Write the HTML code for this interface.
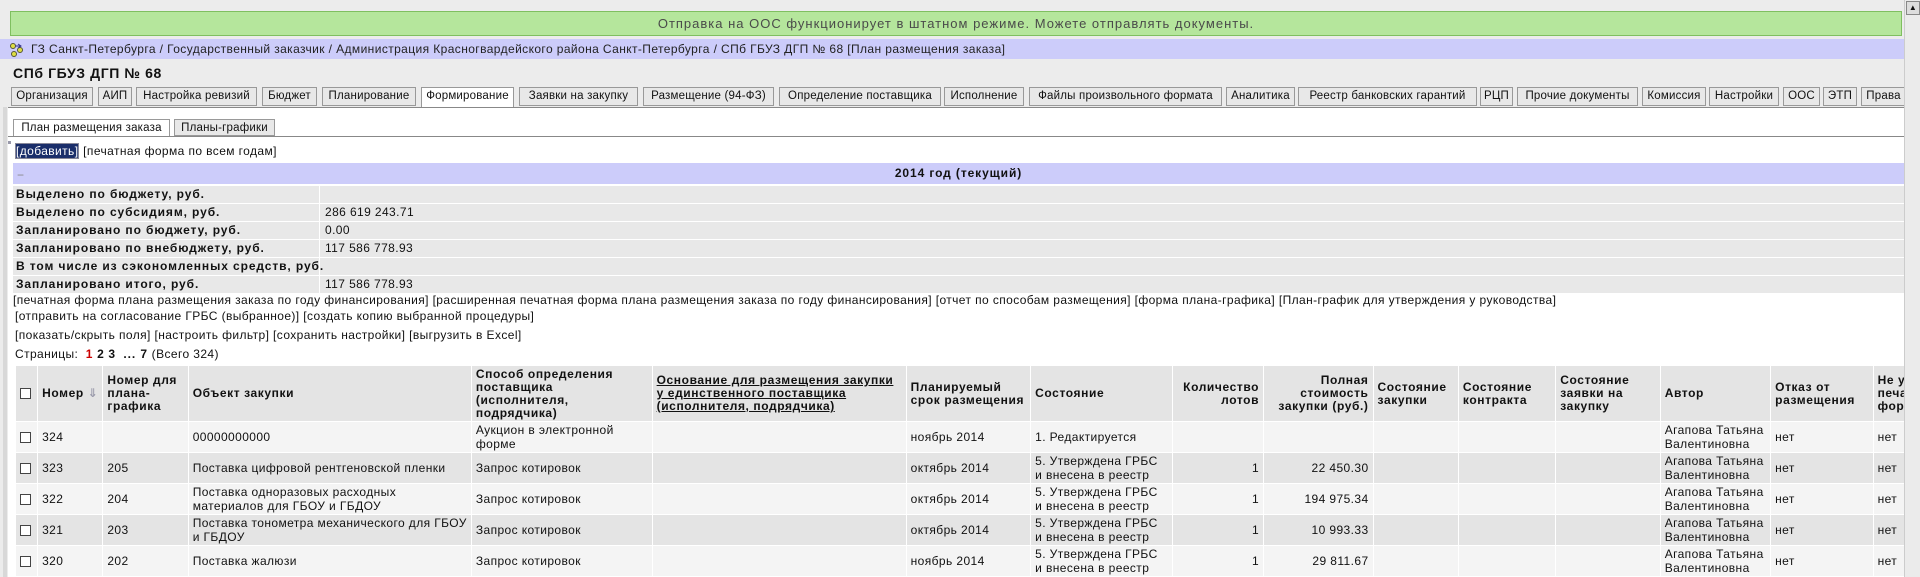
<!DOCTYPE html>
<html><head><meta charset="utf-8">
<style>
*{box-sizing:border-box;margin:0;padding:0}
body{width:1920px;height:577px;overflow:hidden;background:#ececec;font-family:"Liberation Sans","DejaVu Sans",sans-serif;font-size:11px;color:#111;position:relative;letter-spacing:0.4px}
b{letter-spacing:0.9px}
th{letter-spacing:0.6px}
.abs{position:absolute}
#green{left:10px;top:11px;width:1892px;height:25px;background:#b5e69c;border:1px solid #7fbf60;text-align:center;line-height:23px;font-size:13px;color:#4a4a4a;letter-spacing:1px}
#bc{left:0;top:39px;width:1904px;height:20px;background:#ccccfa;line-height:20px;padding-left:31px;font-size:12px;color:#222}
#title{left:13px;top:65px;font-weight:bold;font-size:14px;letter-spacing:0.6px}
#tabs{left:10px;top:87px;height:20px;width:1894px;overflow:hidden;white-space:nowrap}
.tab{position:absolute;top:0;height:19px;border:1px solid #999;background:#e8e8e8;line-height:17px;text-align:center;font-size:11.5px;overflow:hidden;letter-spacing:0.2px}
.tab.act{background:#fff;border-bottom:none;height:21px}
#white{left:8px;top:107px;width:1896px;height:470px;background:#fff;border-top:1px solid #888}
#subtabs .tab{top:119px}
#subline{left:8px;top:136px;width:1896px;height:1px;background:#888}
#add{left:15px;top:144px;font-size:12px;line-height:15px}
#add .hl{background:#1a2e6a;color:#fff;border:1px solid #889}
#year{left:13px;top:163px;width:1891px;height:21px;background:#ccccfa;text-align:center;font-weight:bold;font-size:12px;line-height:21px;letter-spacing:0.9px}
#year .m{position:absolute;left:4px;top:2px;color:#888;font-weight:normal}
.info{left:13px;width:1891px;height:17px;background:#e8e8e8;font-size:12px;line-height:17px}
.info b{position:absolute;left:3px}
.info span{position:absolute;left:306px;top:0;height:17px;width:1px;background:#fff}
.info i{position:absolute;left:312px;font-style:normal}
.ln{left:13px;font-size:12px}
table{position:absolute;left:15px;top:365px;border-collapse:separate;border-spacing:1px;table-layout:fixed;width:1940px;font-size:12px}
th,td{padding:1px 4px;vertical-align:middle;text-align:left;overflow:hidden}
th{background:#e4e4e4;height:55px;font-weight:bold;line-height:13px}
td{height:30px;line-height:14px}
tr.a td{background:#f4f4f4}
tr.b td{background:#e4e4e4}
.r{text-align:right}
.cb{display:inline-block;width:11px;height:11px;border:1px solid #444;background:#fff;vertical-align:middle}
#clip{left:0;top:0;width:1904px;height:577px;overflow:hidden}
#sb{left:1904px;top:0;width:16px;height:577px;background:#ebebeb;border-left:1px solid #ccc}
#sb .up{position:absolute;left:1px;top:1px;width:14px;height:14px;background:#ddd;border:1px solid #888;font-size:8px;text-align:center;line-height:12px}
#lb{left:3px;top:107px;width:4px;height:470px;background:#d8d8d8}
</style></head><body>
<div id="clip" class="abs">
<div id="green" class="abs">Отправка на ООС функционирует в штатном режиме. Можете отправлять документы.</div>
<div id="bc" class="abs"><svg style="position:absolute;left:9px;top:3px" width="16" height="15" viewBox="0 0 16 15"><circle cx="4" cy="4" r="2.5" fill="#dd4" stroke="#553"/><circle cx="11" cy="8" r="2.5" fill="#dd4" stroke="#553"/><circle cx="5" cy="12" r="2.5" fill="#dd4" stroke="#553"/><path d="M6 4h6M9 2l3 2-3 2" stroke="#338" fill="none"/></svg>ГЗ Санкт-Петербурга / Государственный заказчик / Администрация Красногвардейского района Санкт-Петербурга / СПб ГБУЗ ДГП № 68 [План размещения заказа]</div>
<div id="title" class="abs">СПб ГБУЗ ДГП № 68</div>
<div id="white" class="abs"></div>
<div id="lb" class="abs"></div>
<div id="tabs" class="abs">
<div class="tab" style="left:1px;width:82px">Организация</div>
<div class="tab" style="left:88px;width:34px">АИП</div>
<div class="tab" style="left:126px;width:121px">Настройка ревизий</div>
<div class="tab" style="left:252px;width:55px">Бюджет</div>
<div class="tab" style="left:312px;width:94px">Планирование</div>
<div class="tab act" style="left:411px;width:93px">Формирование</div>
<div class="tab" style="left:509px;width:119px">Заявки на закупку</div>
<div class="tab" style="left:633px;width:131px">Размещение (94-ФЗ)</div>
<div class="tab" style="left:769px;width:162px">Определение поставщика</div>
<div class="tab" style="left:934px;width:80px">Исполнение</div>
<div class="tab" style="left:1019px;width:193px">Файлы произвольного формата</div>
<div class="tab" style="left:1216px;width:69px">Аналитика</div>
<div class="tab" style="left:1288px;width:179px">Реестр банковских гарантий</div>
<div class="tab" style="left:1470px;width:33px">РЦП</div>
<div class="tab" style="left:1507px;width:121px">Прочие документы</div>
<div class="tab" style="left:1632px;width:64px">Комиссия</div>
<div class="tab" style="left:1699px;width:70px">Настройки</div>
<div class="tab" style="left:1773px;width:37px">ООС</div>
<div class="tab" style="left:1813px;width:34px">ЭТП</div>
<div class="tab" style="left:1851px;width:45px">Права</div>
</div>
<div id="subtabs">
<div class="tab act" style="left:13px;width:157px;height:18px">План размещения заказа</div>
<div class="tab" style="left:174px;width:101px;height:17px">Планы-графики</div>
</div>
<div id="subline" class="abs"></div>
<div class="abs" style="left:8px;top:141px;width:3px;height:3px;background:#99a"></div>
<div id="add" class="abs"><span class="hl">[добавить]</span> [печатная форма по всем годам]</div>
<div id="year" class="abs"><span class="m">−</span>2014 год (текущий)</div>
<div class="abs info" style="top:186px"><b>Выделено по бюджету, руб.</b><span></span></div>
<div class="abs info" style="top:204px"><b>Выделено по субсидиям, руб.</b><span></span><i>286 619 243.71</i></div>
<div class="abs info" style="top:222px"><b>Запланировано по бюджету, руб.</b><span></span><i>0.00</i></div>
<div class="abs info" style="top:240px"><b>Запланировано по внебюджету, руб.</b><span></span><i>117 586 778.93</i></div>
<div class="abs info" style="top:258px"><b>В том числе из сэкономленных средств, руб.</b><span></span></div>
<div class="abs info" style="top:276px"><b>Запланировано итого, руб.</b><span></span><i>117 586 778.93</i></div>
<div class="abs ln" style="top:293px">[печатная форма плана размещения заказа по году финансирования] [расширенная печатная форма плана размещения заказа по году финансирования] [отчет по способам размещения] [форма плана-графика] [План-график для утверждения у руководства]</div>
<div class="abs ln" style="top:309px;left:15px">[отправить на согласование ГРБС (выбранное)] [создать копию выбранной процедуры]</div>
<div class="abs ln" style="top:328px;left:15px">[показать/скрыть поля] [настроить фильтр] [сохранить настройки] [выгрузить в Excel]</div>
<div class="abs ln" style="top:347px;left:15px">Страницы: &nbsp;<b style="color:#c00">1</b> <b>2</b> <b>3</b> &nbsp;<b>... 7</b> (Всего 324)</div>
<table>
<colgroup><col style="width:21px"><col style="width:64px"><col style="width:84px"><col style="width:281px"><col style="width:179px"><col style="width:252px"><col style="width:123px"><col style="width:140px"><col style="width:90px"><col style="width:108px"><col style="width:84px"><col style="width:96px"><col style="width:103px"><col style="width:109px"><col style="width:101px"><col style="width:80px"></colgroup>
<tr><th><span class="cb"></span></th><th style="white-space:nowrap">Номер <span style="color:#99a">⇓</span></th><th>Номер для плана-графика</th><th>Объект закупки</th><th>Способ определения поставщика (исполнителя, подрядчика)</th><th><u>Основание для размещения закупки у единственного поставщика (исполнителя, подрядчика)</u></th><th>Планируемый срок размещения</th><th>Состояние</th><th class="r">Количество лотов</th><th class="r">Полная стоимость закупки (руб.)</th><th>Состояние закупки</th><th>Состояние контракта</th><th>Состояние заявки на закупку</th><th>Автор</th><th>Отказ от размещения</th><th>Не учит. печат. форм</th></tr>
<tr class="a"><td><span class="cb"></span></td><td>324</td><td></td><td>00000000000</td><td>Аукцион в электронной форме</td><td></td><td>ноябрь 2014</td><td>1. Редактируется</td><td></td><td></td><td></td><td></td><td></td><td>Агапова Татьяна Валентиновна</td><td>нет</td><td>нет</td></tr>
<tr class="b"><td><span class="cb"></span></td><td>323</td><td>205</td><td>Поставка цифровой рентгеновской пленки</td><td>Запрос котировок</td><td></td><td>октябрь 2014</td><td>5. Утверждена ГРБС и внесена в реестр</td><td class="r">1</td><td class="r">22 450.30</td><td></td><td></td><td></td><td>Агапова Татьяна Валентиновна</td><td>нет</td><td>нет</td></tr>
<tr class="a"><td><span class="cb"></span></td><td>322</td><td>204</td><td>Поставка одноразовых расходных материалов для ГБОУ и ГБДОУ</td><td>Запрос котировок</td><td></td><td>октябрь 2014</td><td>5. Утверждена ГРБС и внесена в реестр</td><td class="r">1</td><td class="r">194 975.34</td><td></td><td></td><td></td><td>Агапова Татьяна Валентиновна</td><td>нет</td><td>нет</td></tr>
<tr class="b"><td><span class="cb"></span></td><td>321</td><td>203</td><td>Поставка тонометра механического для ГБОУ и ГБДОУ</td><td>Запрос котировок</td><td></td><td>октябрь 2014</td><td>5. Утверждена ГРБС и внесена в реестр</td><td class="r">1</td><td class="r">10 993.33</td><td></td><td></td><td></td><td>Агапова Татьяна Валентиновна</td><td>нет</td><td>нет</td></tr>
<tr class="a"><td><span class="cb"></span></td><td>320</td><td>202</td><td>Поставка жалюзи</td><td>Запрос котировок</td><td></td><td>ноябрь 2014</td><td>5. Утверждена ГРБС и внесена в реестр</td><td class="r">1</td><td class="r">29 811.67</td><td></td><td></td><td></td><td>Агапова Татьяна Валентиновна</td><td>нет</td><td>нет</td></tr>
</table>
</div>
<div id="sb" class="abs"><div class="up">▲</div></div>
</body></html>
